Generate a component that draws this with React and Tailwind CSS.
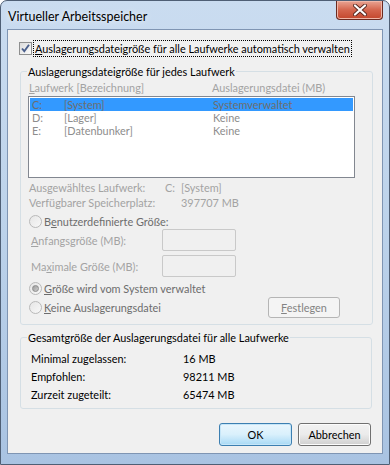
import React from "react";

const font = { fontFamily: 'Lato, "Open Sans", sans-serif' };

function Radio({ checked }) {
  return (
    <span className="relative flex h-[13px] w-[13px] shrink-0 items-center justify-center rounded-full border border-[#b9b9b9] bg-gradient-to-br from-[#e6e6e6] to-[#f8f8f8]">
      {checked && (
        <span className="h-[7px] w-[7px] rounded-full border border-[#8c8c8c] bg-gradient-to-br from-[#9a9a9a] to-[#cfcfcf]" />
      )}
    </span>
  );
}

function Checkbox() {
  return (
    <span className="flex h-[13px] w-[13px] shrink-0 items-center justify-center border border-[#8e8f8f] bg-gradient-to-br from-[#dcdcdc] to-[#fbfbfb]">
      <svg width="11" height="11" viewBox="0 0 11 11">
        <path d="M2 5.5 L4.3 8.2 L9 1.8" fill="none" stroke="#4a5f8c" strokeWidth="1.9" />
      </svg>
    </span>
  );
}

function Button({ children, primary, disabled, className = "" }) {
  const look = disabled
    ? "border-[#b5b5b5] bg-[#f4f4f4] text-[#838383]"
    : primary
    ? "border-[#3c7fb1] bg-gradient-to-b from-[#eaf6fd] via-[#d9f0fc] to-[#a7d9f5] text-black shadow-[inset_0_0_0_1px_#c6e6f8]"
    : "border-[#707070] bg-gradient-to-b from-[#f2f2f2] via-[#ebebeb] to-[#cfcfcf] text-black shadow-[inset_0_0_0_1px_#fcfcfc]";
  return (
    <div className={`flex items-center justify-center rounded-[3px] border ${look} ${className}`}>
      {children}
    </div>
  );
}

const drives = [
  { d: "C:", name: "[System]", size: "Systemverwaltet", sel: true },
  { d: "D:", name: "[Lager]", size: "Keine" },
  { d: "E:", name: "[Datenbunker]", size: "Keine" },
];

export default function App() {
  return (
    <div
      style={font}
      className="flex h-[465px] w-[390px] flex-col overflow-hidden rounded-t-[7px] border border-[#4f5f75] bg-gradient-to-b from-[#cadcf0] via-[#bcd2ea] to-[#a9c3e2] text-[10.9px] leading-[15px] text-black"
    >
      {/* title bar */}
      <div className="flex h-[28px] shrink-0 items-start">
        <div className="pl-[7px] pt-[8px] text-[12.5px] [text-shadow:0_0_6px_#ffffff]">
          Virtueller Arbeitsspeicher
        </div>
        <div className="ml-auto mr-[6px] flex h-[19px] w-[47px] items-center justify-center rounded-b-[4px] border border-t-0 border-[#6b2a20] bg-gradient-to-b from-[#e8a493] via-[#d4654d] to-[#c3462c] shadow-[inset_0_0_0_1px_#f0b7a8]">
          <svg width="14" height="12" viewBox="0 0 14 12">
            <path d="M2 1.5 L12 10.5 M12 1.5 L2 10.5" stroke="#5a2a22" strokeWidth="4" strokeLinecap="round" />
            <path d="M2 1.5 L12 10.5 M12 1.5 L2 10.5" stroke="#ffffff" strokeWidth="2.2" strokeLinecap="round" />
          </svg>
        </div>
      </div>

      {/* client area */}
      <div className="mx-[6px] mb-[10px] flex flex-1 flex-col border border-[#7f95b3] bg-[#f0f0f0]">
        <div className="flex items-center pl-[11px] pt-[10px]">
          <Checkbox />
          <span className="ml-[1px] whitespace-nowrap border border-dotted border-black px-[1px] leading-[15px]">
            <u>A</u>uslagerungsdateigröße für alle Laufwerke automatisch verwalten
          </span>
        </div>

        <fieldset className="ml-[12px] mt-[7px] w-[352px] rounded-[3px] border border-[#d5dfe5] pb-[6px]">
          <legend className="ml-[6px] px-[1px]">Auslagerungsdateigröße für jedes Laufwerk</legend>
          <div className="pl-[7px] pr-[17px]">
            <div className="mt-[1px] flex text-[#a3a3a3]">
              <span className="w-[184px] pl-[1px]">
                <u>L</u>aufwerk [Bezeichnung]
              </span>
              <span>Auslagerungsdatei (MB)</span>
            </div>
            <div className="mt-[1px] h-[82px] w-[327px] border border-[#828790] bg-white p-[1px]">
              {drives.map((r) => (
                <div
                  key={r.d}
                  className={`flex h-[13px] items-center pl-[2px] leading-[13px] ${
                    r.sel ? "bg-[#3399ff] text-[#6e6e6e]" : "text-[#8d8d8d]"
                  }`}
                >
                  <span className="w-[32px]">{r.d}</span>
                  <span className="w-[149px]">{r.name}</span>
                  <span>{r.size}</span>
                </div>
              ))}
            </div>

            <div className="mt-[2px] flex text-[#a3a3a3]">
              <span className="w-[137px] pl-[1px]">Ausgewähltes Laufwerk:</span>
              <span className="w-[16px]">C:</span>
              <span>[System]</span>
            </div>
            <div className="flex text-[#a3a3a3]">
              <span className="w-[153px] pl-[1px]">Verfügbarer Speicherplatz:</span>
              <span>397707 MB</span>
            </div>

            <div className="mt-[4px] flex items-center pl-[1px] text-[#6d6d6d]">
              <Radio />
              <span className="ml-[2px]">
                B<u>e</u>nutzerdefinierte Größe:
              </span>
            </div>
            <div className="flex items-center pl-[3px] text-[#a3a3a3]">
              <span className="w-[131px]">
                <u>A</u>nfangsgröße (MB):
              </span>
              <span className="h-[22px] w-[74px] rounded-[2px] border border-[#c9c9c9] bg-[#f0f0f0]" />
            </div>
            <div className="mt-[4px] flex items-center pl-[3px] text-[#a3a3a3]">
              <span className="w-[131px]">
                Ma<u>x</u>imale Größe (MB):
              </span>
              <span className="h-[22px] w-[74px] rounded-[2px] border border-[#c9c9c9] bg-[#f0f0f0]" />
            </div>

            <div className="mt-[4px] flex items-center pl-[1px] text-[#6d6d6d]">
              <Radio checked />
              <span className="ml-[2px]">
                <u>G</u>röße wird vom System verwaltet
              </span>
            </div>
            <div className="mt-[1px] flex items-center pl-[1px] text-[#6d6d6d]">
              <Radio />
              <span className="ml-[2px]">
                <u>K</u>eine Auslagerungsdatei
              </span>
              <Button disabled className="ml-auto mr-[15px] h-[21px] w-[72px]">
                <span>
                  <u>F</u>estlegen
                </span>
              </Button>
            </div>
          </div>
        </fieldset>

        <fieldset className="ml-[12px] mt-[5px] w-[352px] rounded-[3px] border border-[#d5dfe5] pb-[5px]">
          <legend className="ml-[6px] px-[1px]">Gesamtgröße der Auslagerungsdatei für alle Laufwerke</legend>
          <div className="mt-[4px] pl-[10px]">
            <div className="flex h-[18px] items-center">
              <span className="w-[152px]">Minimal zugelassen:</span>
              <span>16 MB</span>
            </div>
            <div className="flex h-[18px] items-center">
              <span className="w-[152px]">Empfohlen:</span>
              <span>98211 MB</span>
            </div>
            <div className="flex h-[18px] items-center">
              <span className="w-[152px]">Zurzeit zugeteilt:</span>
              <span>65474 MB</span>
            </div>
          </div>
        </fieldset>

        <div className="mt-[14px] flex justify-end gap-[6px] pr-[11px]">
          <Button primary className="h-[23px] w-[73px]">
            OK
          </Button>
          <Button className="h-[23px] w-[73px]">Abbrechen</Button>
        </div>
      </div>
    </div>
  );
}
